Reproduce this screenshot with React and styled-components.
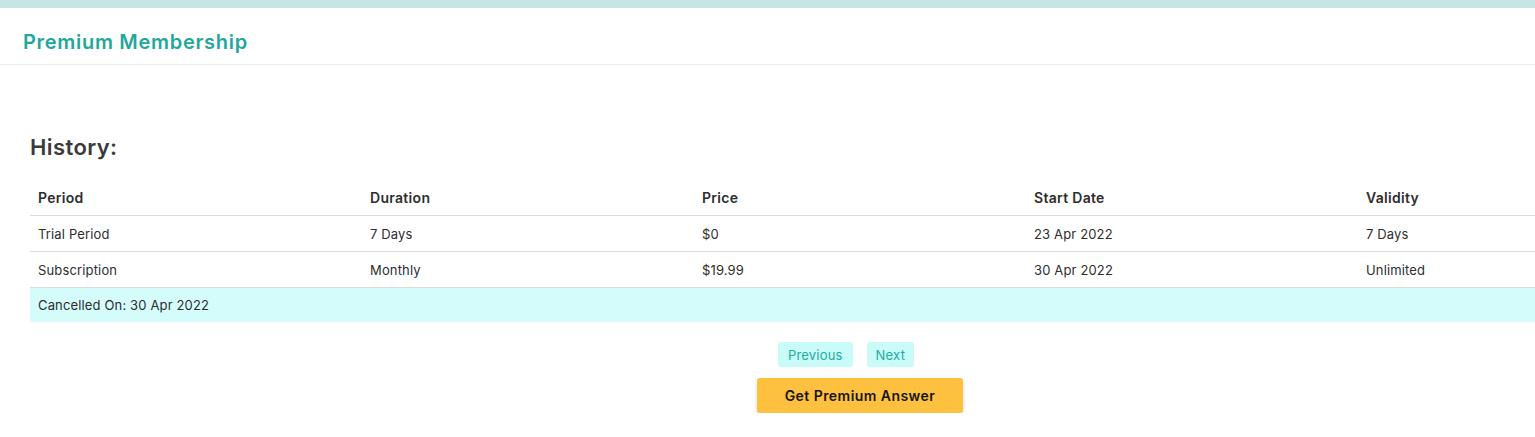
import React from 'react';
import styled, { createGlobalStyle } from 'styled-components';

const GlobalStyle = createGlobalStyle`
    body {
        margin: 0;
        font-family: "Inter", "Noto Sans", sans-serif;
        color: #2b2b2b;
        background: #fff;
        overflow-x: hidden;
    }
`;

const TopBar = styled.div`
    height: 8px;
    background: #c6e5e3;
`;

const Header = styled.header`
    height: 44px;
    padding: 12px 0 0 23px;
    display: flex;
    align-items: center;
    border-bottom: 1px solid #ebebeb;

    h1 {
        margin: 0;
        font-size: 20px;
        font-weight: 600;
        letter-spacing: 0.7px;
        color: #1fa89b;
    }
`;

const Content = styled.section`
    padding: 69px 0 0 30px;
    width: 1660px;
`;

const Title = styled.h2`
    margin: 0 0 20px;
    font-size: 22px;
    font-weight: 600;
    letter-spacing: 0.4px;
    color: #3b3b3b;
    line-height: 26px;
`;

const Table = styled.table`
    width: 1660px;
    border-collapse: collapse;
    table-layout: fixed;
    font-size: 13px;
    letter-spacing: 0.15px;

    th, td {
        text-align: left;
        padding: 0 8px;
        color: #2e2e2e;
    }
    th {
        height: 35px;
        font-size: 14px;
        font-weight: 600;
        letter-spacing: 0.3px;
        border-bottom: 1px solid #dcdcdc;
    }
    td {
        height: 35px;
    }
    tbody tr + tr td {
        border-top: 1px solid #dcdcdc;
    }
`;

const NoteRow = styled.tr`
    td {
        background: #d3fcfb;
        height: 34px;
    }
`;

const Pager = styled.div`
    display: flex;
    justify-content: center;
    gap: 14px;
    margin-top: 20px;
    padding-right: 28px;
`;

const PageButton = styled.button`
    height: 25px;
    padding: 0 ${p => p.$wide ? 10 : 9}px;
    border: none;
    border-radius: 3px;
    background: #c9fbf8;
    color: #20ae9f;
    font-family: inherit;
    font-size: 13px;
    letter-spacing: 0.2px;
    cursor: pointer;
`;

const Actions = styled.div`
    display: flex;
    justify-content: center;
    margin-top: 11px;
`;

const PremiumButton = styled.button`
    width: 206px;
    height: 35px;
    border: none;
    border-radius: 3px;
    background: #fdc13f;
    color: #151515;
    font-family: inherit;
    font-size: 14px;
    font-weight: 600;
    letter-spacing: 0.45px;
    box-shadow: 0 2px 4px rgba(0, 0, 0, 0.15);
    cursor: pointer;
`;

const columns = ['Period', 'Duration', 'Price', 'Start Date', 'Validity'];

const rows = [
    ['Trial Period', '7 Days', '$0', '23 Apr 2022', '7 Days'],
    ['Subscription', 'Monthly', '$19.99', '30 Apr 2022', 'Unlimited'],
];

export default function App() {
    return (
        <>
            <GlobalStyle />
            <TopBar />
            <Header>
                <h1>Premium Membership</h1>
            </Header>
            <Content>
                <Title>History:</Title>
                <Table>
                    <thead>
                        <tr>
                            {columns.map(c => <th key={c}>{c}</th>)}
                        </tr>
                    </thead>
                    <tbody>
                        {rows.map((r, i) => (
                            <tr key={i}>
                                {r.map((v, j) => <td key={j}>{v}</td>)}
                            </tr>
                        ))}
                        <NoteRow>
                            <td colSpan={5}>Cancelled On: 30 Apr 2022</td>
                        </NoteRow>
                    </tbody>
                </Table>
                <Pager>
                    <PageButton $wide>Previous</PageButton>
                    <PageButton>Next</PageButton>
                </Pager>
                <Actions>
                    <PremiumButton>Get Premium Answer</PremiumButton>
                </Actions>
            </Content>
        </>
    );
}
